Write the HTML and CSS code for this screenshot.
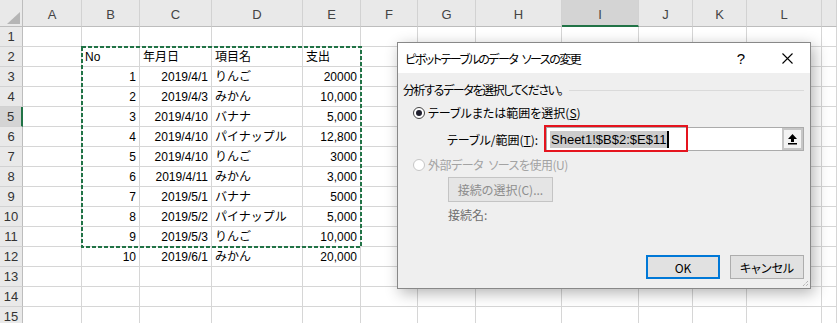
FILE: index.html
```
<!doctype html>
<html lang="ja">
<head>
  <meta charset="utf-8">
  <link rel="stylesheet" href="styles.css">
</head>
<body>

  <div class="sheet">
    <div class="row head">
      <span class="corner"><i class="tri"></i></span>
      <span>A</span><span>B</span><span>C</span><span>D</span><span>E</span><span>F</span>
      <span>G</span><span>H</span><span class="sel">I</span><span>J</span><span>K</span><span>L</span><span></span>
    </div>

    <div class="row"><span class="rh">1</span><span></span><span></span><span></span><span></span><span></span><span></span><span></span><span></span><span></span><span></span><span></span><span></span><span></span></div>
    <div class="row"><span class="rh">2</span><span></span><span>No</span><span>年月日</span><span>項目名</span><span>支出</span><span></span><span></span><span></span><span></span><span></span><span></span><span></span><span></span></div>
    <div class="row"><span class="rh">3</span><span></span><span class="num">1</span><span class="num">2019/4/1</span><span>りんご</span><span class="num">20000</span><span></span><span></span><span></span><span></span><span></span><span></span><span></span><span></span></div>
    <div class="row"><span class="rh">4</span><span></span><span class="num">2</span><span class="num">2019/4/3</span><span>みかん</span><span class="num">10,000</span><span></span><span></span><span></span><span></span><span></span><span></span><span></span><span></span></div>
    <div class="row"><span class="rh sel">5</span><span></span><span class="num">3</span><span class="num">2019/4/10</span><span>バナナ</span><span class="num">5,000</span><span></span><span></span><span></span><span></span><span></span><span></span><span></span><span></span></div>
    <div class="row"><span class="rh">6</span><span></span><span class="num">4</span><span class="num">2019/4/10</span><span>パイナップル</span><span class="num">12,800</span><span></span><span></span><span></span><span></span><span></span><span></span><span></span><span></span></div>
    <div class="row"><span class="rh">7</span><span></span><span class="num">5</span><span class="num">2019/4/10</span><span>りんご</span><span class="num">3000</span><span></span><span></span><span></span><span></span><span></span><span></span><span></span><span></span></div>
    <div class="row"><span class="rh">8</span><span></span><span class="num">6</span><span class="num">2019/4/11</span><span>みかん</span><span class="num">3,000</span><span></span><span></span><span></span><span></span><span></span><span></span><span></span><span></span></div>
    <div class="row"><span class="rh">9</span><span></span><span class="num">7</span><span class="num">2019/5/1</span><span>バナナ</span><span class="num">5000</span><span></span><span></span><span></span><span></span><span></span><span></span><span></span><span></span></div>
    <div class="row"><span class="rh">10</span><span></span><span class="num">8</span><span class="num">2019/5/2</span><span>パイナップル</span><span class="num">5,000</span><span></span><span></span><span></span><span></span><span></span><span></span><span></span><span></span></div>
    <div class="row"><span class="rh">11</span><span></span><span class="num">9</span><span class="num">2019/5/3</span><span>りんご</span><span class="num">10,000</span><span></span><span></span><span></span><span></span><span></span><span></span><span></span><span></span></div>
    <div class="row"><span class="rh">12</span><span></span><span class="num">10</span><span class="num">2019/6/1</span><span>みかん</span><span class="num">20,000</span><span></span><span></span><span></span><span></span><span></span><span></span><span></span><span></span></div>
    <div class="row"><span class="rh">13</span><span></span><span></span><span></span><span></span><span></span><span></span><span></span><span></span><span></span><span></span><span></span><span></span><span></span></div>
    <div class="row"><span class="rh">14</span><span></span><span></span><span></span><span></span><span></span><span></span><span></span><span></span><span></span><span></span><span></span><span></span><span></span></div>
    <div class="row"><span class="rh">15</span><span></span><span></span><span></span><span></span><span></span><span></span><span></span><span></span><span></span><span></span><span></span><span></span><span></span></div>

    <!-- copy range marquee over B2:E11 -->
    <svg class="marquee" width="281" height="203" viewBox="0 0 281 203">
      <rect x="1" y="1" width="279" height="200" fill="none" stroke="#217346" stroke-width="2" stroke-dasharray="4 2"/>
    </svg>

    <div class="dialog">
      <div class="dlg-title">
        <span class="dlg-caption">ピボットテーブルのデータ&ensp;ソースの変更</span>
        <span class="tbtn help">?</span>
        <span class="tbtn">
          <svg width="11" height="11" viewBox="0 0 11 11"><path d="M0.5 0.5 L10.5 10.5 M10.5 0.5 L0.5 10.5" stroke="#000" stroke-width="1.1"/></svg>
        </span>
      </div>

      <div class="dlg-body">
        <div class="group-head"><span class="group-text">分析するデータを選択してください。</span><span class="rule"></span></div>

        <div class="opt"><span class="radio on"></span><span>テーブルまたは範囲を選択(<u>S</u>)</span></div>

        <div class="range-row">
          <span class="range-label">テーブル/範囲(<u>T</u>):</span>
          <div class="range-input">
            <span class="sel-text">Sheet1!$B$2:$E$11</span><span class="caret"></span>
            <span class="range-btn">
              <svg width="11" height="12" viewBox="0 0 11 12"><path d="M5.5 1 L10 6 H7 V9 H4 V6 H1 Z" fill="#000"/><rect x="1" y="10" width="9" height="1.5" fill="#000"/></svg>
            </span>
          </div>
          <span class="mark"></span>
        </div>

        <div class="opt off"><span class="radio"></span><span>外部データ&ensp;ソースを使用(U)</span></div>

        <button class="conn-btn" disabled>接続の選択(C)...</button>
        <div class="conn-name">接続名:</div>

        <div class="actions">
          <button class="btn ok">OK</button>
          <button class="btn">キャンセル</button>
        </div>
      </div>

      <svg class="grip" width="8" height="8" viewBox="0 0 8 8">
        <path d="M7 2 L2 7 M7 5 L5 7" stroke="#9a9a9a" stroke-width="1" stroke-dasharray="1 1"/>
      </svg>
    </div>
  </div>

</body>
</html>
```

FILE: styles.css
```
html, body {
  margin: 0;
  padding: 0;
  width: 837px;
  height: 323px;
  overflow: hidden;
  background-color: #fff;
  font-family: "Liberation Sans", "Noto Sans CJK JP", sans-serif;
  font-size: 12px;
  color: #000;
}

.sheet {
  position: relative;
  height: 323px;
  overflow: hidden;
}

.row {
  display: grid;
  grid-template-columns: 23px 59px 58px 72px 91px 58px 57px 58px 86px 77px 54px 54px 75px 1fr;
  height: 20px;
}

.row > span {
  box-sizing: border-box;
  border-right: 1px solid #d6d6d6;
  border-bottom: 1px solid #d6d6d6;
  padding: 1px 3px 0;
  line-height: 18px;
  white-space: nowrap;
  overflow: hidden;
}

.num {
  text-align: right;
}

/* column headers */
.row.head {
  height: 27px;
}

.row.head > span {
  background-color: #e9e9e9;
  border-right-color: #d2d2d2;
  border-bottom-color: #bdbdbd;
  text-align: center;
  font-size: 13px;
  color: #444;
  padding-top: 5px;
  line-height: 19px;
}

.row.head > span.sel {
  background-color: #d4d4d4;
  border-bottom: 2px solid #217346;
}

.row.head > .corner {
  display: flex;
  justify-content: flex-end;
  align-items: flex-end;
  padding: 0 2px 2px 0;
  border-right-color: #bdbdbd;
}

.tri {
  width: 0;
  height: 0;
  border-left: 13px solid transparent;
  border-bottom: 12px solid #b5b5b5;
}

/* row headers */
.row > .rh {
  background-color: #e9e9e9;
  border-right-color: #bdbdbd;
  border-bottom-color: #d2d2d2;
  text-align: center;
  padding: 1px 0 0;
  color: #333;
  font-size: 13px;
}

.row > .rh.sel {
  background-color: #d4d4d4;
  border-right: 2px solid #217346;
}

.marquee {
  position: absolute;
  left: 81px;
  top: 46px;
}

/* dialog */
.dialog {
  position: absolute;
  left: 397px;
  top: 42px;
  width: 414px;
  height: 247px;
  box-sizing: border-box;
  border: 1px solid #888;
  background-color: #efefef;
  box-shadow: 3px 4px 14px rgba(0, 0, 0, 0.3);
  display: flex;
  flex-direction: column;
  font-family: "Noto Sans CJK JP", sans-serif;
  font-feature-settings: "palt";
  font-size: 12px;
}

.dlg-title {
  height: 30px;
  display: flex;
  align-items: center;
  padding-left: 7px;
  background-color: #fff;
}

.dlg-caption {
  flex: 1;
  letter-spacing: -1.5px;
}

.tbtn {
  width: 46px;
  height: 30px;
  display: flex;
  align-items: center;
  justify-content: center;
}

.tbtn.help {
  font-family: "Liberation Sans", sans-serif;
  font-size: 15px;
}

.dlg-body {
  flex: 1;
  display: flex;
  flex-direction: column;
  align-items: flex-start;
  padding: 9px 6px 9px 5px;
}

.group-head {
  align-self: stretch;
  display: flex;
  align-items: center;
  height: 16px;
  line-height: 16px;
}

.group-text {
  letter-spacing: -1.4px;
}

.group-head .rule {
  flex: 1;
  border-top: 1px solid #dadada;
  margin-left: 7px;
}

.opt {
  display: flex;
  align-items: center;
  gap: 3px;
  height: 16px;
  line-height: 16px;
  margin: 7px 0 0 10px;
}

.radio {
  width: 12px;
  height: 12px;
  box-sizing: border-box;
  border: 1px solid #444;
  border-radius: 50%;
  background-color: #fff;
  display: flex;
  align-items: center;
  justify-content: center;
}

.radio.on::after {
  content: "";
  width: 6px;
  height: 6px;
  border-radius: 50%;
  background-color: #1f1f2e;
}

.opt.off {
  margin-top: 6px;
  color: #a3a3a3;
  letter-spacing: -0.5px;
}

.opt.off .radio {
  border-color: #c6c6c6;
}

.range-row {
  position: relative;
  align-self: stretch;
  display: flex;
  align-items: center;
  height: 24px;
  margin: 6px 0 0 44px;
}

.range-label {
  width: 99px;
}

.range-input {
  flex: 1;
  height: 24px;
  box-sizing: border-box;
  border: 1px solid #ababab;
  background-color: #fff;
  display: flex;
  align-items: center;
  padding-left: 3px;
  font-family: "Liberation Sans", sans-serif;
  font-feature-settings: normal;
  font-size: 13px;
}

.sel-text {
  background-color: #cccccc;
  line-height: 17px;
  padding: 0 1px;
}

.caret {
  width: 2px;
  height: 17px;
  background-color: #000;
}

.range-btn {
  margin-left: auto;
  width: 21px;
  height: 22px;
  box-sizing: border-box;
  border: 2px solid #c6c6c6;
  background-color: #f3f3f3;
  display: flex;
  align-items: center;
  justify-content: center;
}

/* red annotation box around the range text */
.mark {
  position: absolute;
  left: 97px;
  top: -2px;
  width: 144px;
  height: 27px;
  box-sizing: border-box;
  border: 2px solid #e5141e;
}

.conn-btn {
  margin: 4px 0 0 45px;
  width: 105px;
  height: 25px;
  box-sizing: border-box;
  border: 1px solid #c4c4c4;
  background-color: #e5e5e5;
  color: #8d8d8d;
  font-family: inherit;
  font-feature-settings: "palt";
  font-size: 12px;
  padding: 0;
}

.conn-name {
  margin: 5px 0 0 45px;
  height: 16px;
  line-height: 16px;
  color: #707070;
}

.actions {
  align-self: stretch;
  margin-top: auto;
  display: flex;
  justify-content: flex-end;
  gap: 10px;
}

.btn {
  width: 74px;
  height: 24px;
  box-sizing: border-box;
  border: 1px solid #adadad;
  background-color: #e1e1e1;
  font-family: inherit;
  font-feature-settings: "palt";
  font-size: 12px;
  color: #000;
  padding: 0;
}

.btn.ok {
  border: 2px solid #0078d7;
}

.grip {
  position: absolute;
  right: 1px;
  bottom: 1px;
}
```
